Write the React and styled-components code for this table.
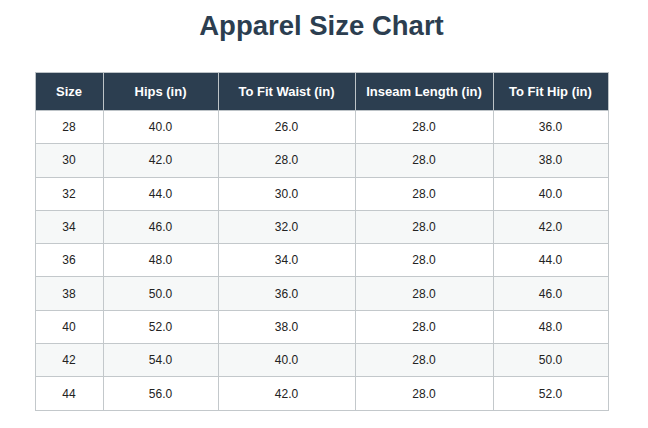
import React from 'react';
import styled, { createGlobalStyle } from 'styled-components';

const GlobalStyle = createGlobalStyle`
    body {
        margin: 0;
        background: #ffffff;
        font-family: "Liberation Sans", Arial, sans-serif;
    }
`;

const Page = styled.div`
    width: 643px;
    padding-top: 8px;
`;

const Title = styled.h1`
    margin: 0 0 28px;
    text-align: center;
    font-size: 27.5px;
    line-height: 36px;
    font-weight: 700;
    color: #2c3e50;
`;

const Table = styled.table`
    width: 574px;
    margin: 0 auto;
    table-layout: fixed;
    border-collapse: collapse;
    font-size: 12px;
    color: #222;
`;

const HeadCell = styled.th`
    box-sizing: border-box;
    width: ${p => p.$width}px;
    background: #2c3e50;
    color: #ffffff;
    font-size: 13px;
    font-weight: 700;
    height: 38px;
    padding: 0 4px;
    border: 1px solid #bdc3c7;
    text-align: center;
`;

const Row = styled.tr`
    background: ${p => (p.$striped ? '#f6f8f8' : '#ffffff')};
`;

const Cell = styled.td`
    height: 32.3px;
    padding: 0 4px;
    border: 1px solid #c3c8cb;
    text-align: center;
`;

const columns = [
    { label: 'Size', width: 68 },
    { label: 'Hips (in)', width: 115 },
    { label: 'To Fit Waist (in)', width: 137 },
    { label: 'Inseam Length (in)', width: 138 },
    { label: 'To Fit Hip (in)', width: 115 },
];

const sizes = [28, 30, 32, 34, 36, 38, 40, 42, 44];

function App() {
    return (
        <Page>
            <GlobalStyle />
            <Title>Apparel Size Chart</Title>
            <Table>
                <thead>
                    <tr>
                        {columns.map(col => (
                            <HeadCell key={col.label} $width={col.width}>
                                {col.label}
                            </HeadCell>
                        ))}
                    </tr>
                </thead>
                <tbody>
                    {sizes.map((size, i) => (
                        <Row key={size} $striped={i % 2 === 1}>
                            <Cell>{size}</Cell>
                            <Cell>{(40 + i * 2).toFixed(1)}</Cell>
                            <Cell>{(26 + i * 2).toFixed(1)}</Cell>
                            <Cell>28.0</Cell>
                            <Cell>{(36 + i * 2).toFixed(1)}</Cell>
                        </Row>
                    ))}
                </tbody>
            </Table>
        </Page>
    );
}

export default App;
